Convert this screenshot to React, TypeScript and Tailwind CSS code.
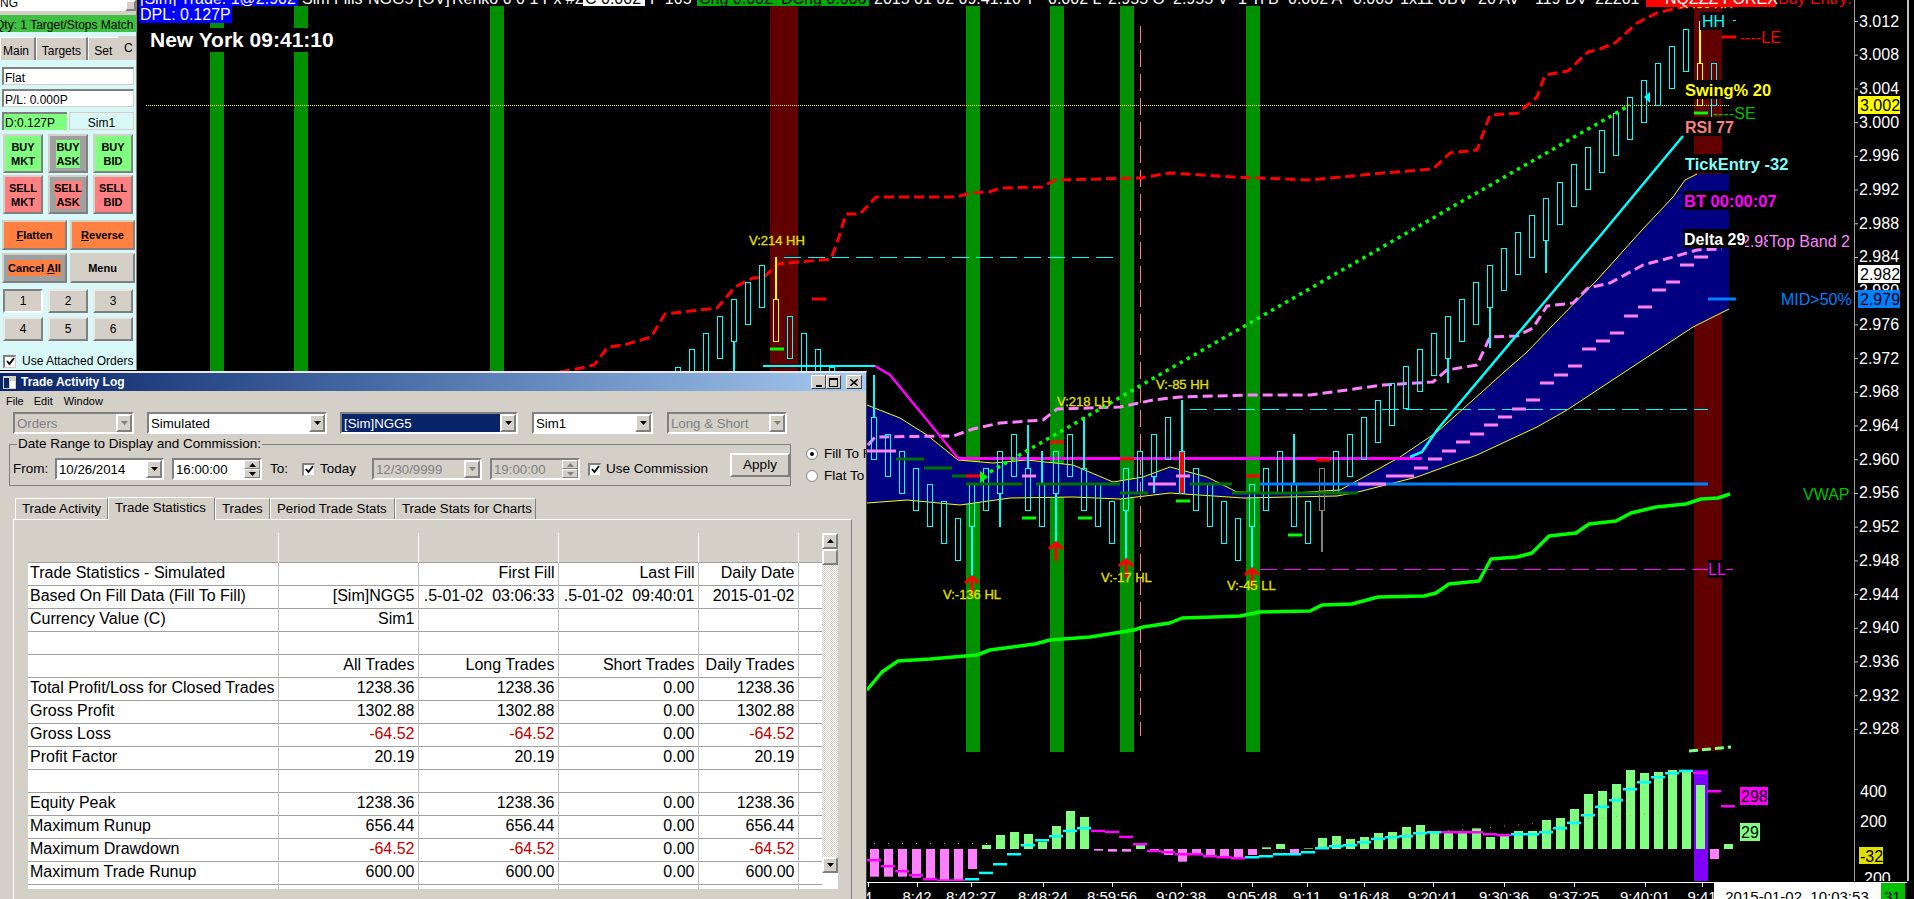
import React from "react";

const RAISED = "border-2 border-t-white border-l-white border-r-[#808080] border-b-[#808080]";
const SUNKEN = "border-2 border-t-[#808080] border-l-[#808080] border-r-white border-b-white";

// --- chart data, all in page pixels ---
const GREEN_BARS = [210, 294, 490, 966, 1050, 1120, 1246];

type Candle = [x: number, top: number, wickTop?: number, wickBottom?: number, color?: string, fill?: string];

const CANDLES: Candle[] = [
  [678, 367], [692, 349], [706, 333], [720, 316], [734, 299, 0, 371], [748, 282], [762, 265],
  [776, 299, 257, 0, "#ffff00"], [790, 316], [804, 333], [818, 349], [832, 367],
  [874, 417, 375], [888, 434], [902, 451], [916, 468], [930, 484], [944, 501], [958, 518],
  [972, 484, 0, 577], [986, 468], [1000, 451, 0, 527], [1014, 434], [1028, 468, 425], [1042, 484, 451],
  [1056, 451, 0, 543], [1070, 434], [1084, 468, 417], [1098, 484], [1112, 501], [1126, 468, 0, 560],
  [1140, 451], [1154, 434, 0, 493], [1168, 417], [1182, 451, 400, 0, "#00ffff", "#ff0000"], [1196, 468],
  [1210, 484], [1224, 501], [1238, 518], [1252, 484, 0, 570], [1266, 468], [1280, 451], [1294, 484, 434],
  [1308, 501], [1322, 468, 0, 552, "#808080"], [1336, 451], [1350, 434], [1364, 417], [1378, 400],
  [1392, 383], [1406, 366], [1420, 349], [1434, 333], [1448, 316, 0, 383], [1462, 299], [1476, 282],
  [1490, 265, 0, 348], [1504, 248], [1518, 232], [1532, 215], [1546, 198, 0, 273], [1560, 182], [1574, 164],
  [1588, 147], [1602, 130], [1616, 113], [1630, 97], [1644, 80], [1658, 63], [1672, 46], [1686, 29],
  [1700, 63, 21, 0, "#ffff00"], [1714, 63],
];

const pts = (a: number[][]) => a.map((p) => p.join(",")).join(" ");

const RED_LINE = [[560,372],[581,368],[594,365],[608,347],[624,345],[651,337],[665,314],[717,308],[735,287],[753,278],[764,277],[778,264],[831,259],[838,240],[846,214],[860,214],[876,197],[956,197],[971,193],[989,192],[1001,188],[1042,187],[1055,180],[1100,179],[1140,178],[1170,173],[1233,177],[1310,180],[1383,173],[1433,169],[1450,153],[1477,150],[1490,115],[1518,113],[1537,97],[1545,75],[1568,71],[1588,52],[1600,49],[1615,43],[1637,23],[1657,13],[1677,8],[1700,4]];
const PINK_LINE = [[868,445],[875,437],[953,436],[973,429],[1000,423],[1043,420],[1057,409],[1120,407],[1153,400],[1180,397],[1250,395],[1310,395],[1383,385],[1433,382],[1447,370],[1477,365],[1490,337],[1517,336],[1533,328],[1547,306],[1573,303],[1588,288],[1610,283],[1643,265],[1673,257],[1697,250],[1722,249]];
const CLOUD_TOP = [[867,405],[900,418],[927,435],[958,460],[993,463],[1027,460],[1073,465],[1113,482],[1143,477],[1170,467],[1207,477],[1237,492],[1293,493],[1340,490],[1353,483],[1400,457],[1437,432],[1473,400],[1503,373],[1527,352],[1553,325],[1597,280],[1642,230],[1673,197],[1685,180],[1697,174]];
const CLOUD_BOTTOM = [[867,503],[907,500],[960,505],[1010,498],[1073,497],[1120,499],[1170,493],[1243,498],[1337,496],[1358,492],[1417,477],[1477,455],[1537,427],[1567,410],[1617,377],[1693,327],[1729,309]];
const VWAP = [[867,690],[882,672],[898,661],[930,659],[977,655],[990,650],[1035,644],[1050,640],[1090,637],[1134,630],[1143,627],[1170,623],[1182,618],[1213,617],[1240,616],[1260,612],[1310,611],[1322,605],[1352,604],[1378,597],[1424,596],[1436,593],[1449,584],[1479,581],[1491,559],[1517,557],[1532,553],[1549,536],[1576,533],[1589,524],[1616,521],[1631,513],[1656,507],[1686,504],[1701,499],[1718,498],[1730,494]];
const CYAN_SLOPE = [[1410,457],[1422,452],[1437,430],[1605,230],[1683,136]];
const MAGENTA_SLOPE = [[875,366],[890,375],[927,420],[958,458]];

// [x1, x2, y]
const DARK_GREEN = [[896,924,459],[924,952,468],[952,966,476],[966,1022,484],[1036,1120,484],[1120,1148,493],[1190,1232,484],[1232,1358,493]];
const RED_TICKS = [[966,980,476],[1050,1064,442],[1120,1134,459],[1246,1260,476],[1316,1330,460],[812,826,299],[1722,1736,37]];
const LIME_TICKS = [[1022,1036,518],[1078,1092,518],[1176,1190,501],[1288,1302,535],[770,784,349],[1694,1708,113]];
const PINK_TICKS = [[867,896,451],[1022,1036,476],[1148,1176,484],[1176,1190,476],[1358,1386,484],[1386,1414,476],[1414,1428,468],[1428,1442,459],[1442,1456,451],[1456,1470,442],[1470,1484,434],[1484,1498,425],[1498,1512,417],[1512,1526,409],[1526,1540,400],[1540,1554,383],[1554,1568,375],[1568,1582,366],[1582,1596,349],[1596,1610,341],[1610,1624,333],[1624,1638,316],[1638,1652,307],[1652,1666,290],[1666,1680,282],[1680,1694,265],[1694,1708,257]];

const ARROWS = [[972,577],[1056,543],[1126,560],[1252,569]];

const VOLUME = [410,410,410,413,420,422,422,387,315,285,276,282,305,258,213,231,332,335,335,315,335,345,365,345,350,348,352,345,322,312,340,325,294,288,297,291,279,276,261,255,276,275,275,265,291,285,273,273,240,234,207,162,153,132,90,99,96,90,90,135,357,312];
// positive = cyan step, negative = magenta step
const STEPS = [-360,-378,-393,-405,-417,-421,-421,417,398,372,342,315,300,288,272,264,-272,-275,-290,-312,-332,-336,-342,-342,-348,-351,-354,351,348,342,342,336,324,318,315,306,296,291,288,279,276,-276,-276,-276,-282,-285,282,282,276,264,248,225,200,180,147,126,111,99,92,-98,-153,-198];

const PRICES = ["3.012","3.008","3.004","3.000","2.996","2.992","2.988","2.984","2.980","2.976","2.972","2.968","2.964","2.960","2.956","2.952","2.948","2.944","2.940","2.936","2.932","2.928"];
const TIMES: [number, string][] = [[868,"4"],[917,"8:42"],[971,"8:42:27"],[1043,"8:48:24"],[1112,"8:59:56"],[1181,"9:02:38"],[1252,"9:05:48"],[1307,"9:11"],[1364,"9:16:48"],[1433,"9:20:41"],[1504,"9:30:36"],[1574,"9:37:25"],[1645,"9:40:01"],[1702,"9:41"]];

const HEADER: [number, string][] = [
  [302,"Sim Fills"],[368,"NGG5 [OV]"],[452,"Renko 0 0 1 Px #2"],[650,"P  105"],[874,"2015 01 02 09:41:10 T"],[1048,"0.002 L"],[1108,"2.955 O"],[1173,"2.955 V"],[1238,"1 Tr"],[1268,"B"],[1288,"0.002 A"],[1353,"0.003"],[1400,"1x11 0"],[1447,"BV"],[1478,"20 AV"],[1535,"119 DV"],[1595,"22201"],
];

function Ticks({ list, color }: { list: number[][]; color: string }) {
  return (
    <>
      {list.map(([a, b, y]) => (
        <rect key={`${a}-${y}`} x={a} y={y - 1.5} width={b - a} height={3} fill={color} />
      ))}
    </>
  );
}

function Tag({ x, y, w, text, color, size = 16.5, bold = true }: { x: number; y: number; w: number; text: string; color: string; size?: number; bold?: boolean }) {
  return (
    <>
      <rect x={x} y={y - 10} width={w} height={19} fill="#000" />
      <text x={x + 1} y={y} dominantBaseline="central" fontSize={size} fontWeight={bold ? 700 : 400} fill={color}>
        {text}
      </text>
    </>
  );
}

function PriceBox({ y, text, bg }: { y: number; text: string; bg: string }) {
  return (
    <>
      <rect x={1858} y={y - 9} width={42} height={18} fill={bg} />
      <text x={1860} y={y} dominantBaseline="central" fontSize={16} fill="#000">{text}</text>
    </>
  );
}

function Chart() {
  return (
    <svg viewBox="137 0 1777 899" className="block w-[1777px] h-[899px] shrink-0 bg-black">
      {GREEN_BARS.map((x) => (
        <rect key={x} x={x} y={6} width={14} height={746} fill="#009000" />
      ))}
      <rect x={770} y={6} width={28} height={366} fill="#600000" />
      <rect x={1694} y={6} width={28} height={745} fill="#600000" />

      <rect x={137} y={28} width={210} height={24} fill="#000" />

      <polygon points={pts([...CLOUD_TOP, [1729, 174], ...[...CLOUD_BOTTOM].reverse()])} fill="#000080" />
      <polyline points={pts(CLOUD_TOP)} fill="none" stroke="#ffff00" strokeWidth={1} />
      <polyline points={pts(CLOUD_BOTTOM)} fill="none" stroke="#ffff00" strokeWidth={1} />

      <line x1={146} y1={105.5} x2={1729} y2={105.5} stroke="#ffff00" strokeWidth={1} strokeDasharray="1 1" />
      <line x1={784} y1={257.5} x2={1114} y2={257.5} stroke="#00ffff" strokeWidth={1} strokeDasharray="17 7" />
      <line x1={1190} y1={409.5} x2={1708} y2={409.5} stroke="#00ffff" strokeWidth={1} strokeDasharray="17 7" />
      <line x1={1260} y1={569.5} x2={1737} y2={569.5} stroke="#ff00ff" strokeWidth={1} strokeDasharray="17 7" />
      <line x1={1140.5} y1={26} x2={1140.5} y2={736} stroke="#ff8080" strokeWidth={1} strokeDasharray="17 7" />

      <polyline points={pts(RED_LINE)} fill="none" stroke="#ff0000" strokeWidth={3} strokeLinejoin="round" strokeDasharray="10 5" />
      <polyline points={pts(PINK_LINE)} fill="none" stroke="#ff80ff" strokeWidth={3} strokeLinejoin="round" strokeDasharray="10 5" />
      <polyline points={pts(VWAP)} fill="none" stroke="#00ff00" strokeWidth={3.5} strokeLinejoin="round" />

      <line x1={763} y1={366} x2={875} y2={366} stroke="#00ffff" strokeWidth={2} />
      <polyline points={pts(MAGENTA_SLOPE)} fill="none" stroke="#ff00ff" strokeWidth={2.5} />
      <rect x={958} y={457} width={464} height={3} fill="#ff00ff" />

      {CANDLES.map(([x, top, wt, wb, color = "#00ffff", fill]) => (
        <g key={x}>
          {wt ? <line x1={x} y1={wt} x2={x} y2={top} stroke={color} strokeWidth={2} /> : null}
          {wb ? <line x1={x} y1={top + 42} x2={x} y2={wb} stroke={color} strokeWidth={2} /> : null}
          <rect x={x - 2.5} y={top + 0.5} width={5} height={42} fill={fill ?? "none"} stroke={color} strokeWidth={1} />
        </g>
      ))}

      <Ticks list={DARK_GREEN} color="#007000" />
      <rect x={1260} y={482.5} width={448} height={3} fill="#0080ff" />
      <Ticks list={RED_TICKS} color="#ff0000" />
      <Ticks list={LIME_TICKS} color="#00ff00" />
      <Ticks list={PINK_TICKS} color="#ff80ff" />
      <rect x={1708} y={297.5} width={28} height={3} fill="#0080ff" />

      <polyline points={pts(CYAN_SLOPE)} fill="none" stroke="#00ffff" strokeWidth={2.5} />
      <line x1={990} y1={472} x2={1630} y2={105} stroke="#00ff00" strokeWidth={3.5} strokeDasharray="3.5 4.6" />
      <polygon points="980,471 988,477 980,483" fill="#00ff00" />
      <polygon points="1650,92 1644,97 1650,103" fill="#00ffff" />
      <line x1={1711.5} y1={105} x2={1711.5} y2={117} stroke="#00ffff" strokeWidth={1} />

      {ARROWS.map(([x, y]) => (
        <path key={x} d={`M${x - 7} ${y + 6} L${x} ${y} L${x + 7} ${y + 6} M${x} ${y} L${x} ${y + 18}`} fill="none" stroke="#ff0000" strokeWidth={3} />
      ))}

      <g fontSize={13} fill="#e0e000" stroke="#e0e000" strokeWidth={0.3}>
        <text x={749} y={245}>V:214 HH</text>
        <text x={1057} y={406}>V:218 LH</text>
        <text x={1156} y={389}>V:-85 HH</text>
        <text x={943} y={599}>V:-136 HL</text>
        <text x={1101} y={582}>V:-17 HL</text>
        <text x={1227} y={590}>V:-45 LL</text>
        <text x={1677} y={8}>V:436 HH</text>
      </g>

      {/* right side labels */}
      <rect x={1700} y={12} width={40} height={18} fill="#000" />
      <text x={1702} y={21} dominantBaseline="central" fontSize={16} fill="#00ffff">HH</text>
      <rect x={1733} y={20} width={3} height={1} fill="#00ffff" />
      <text x={1740} y={37} dominantBaseline="central" fontSize={16} fill="#ff0000">----LE</text>
      <Tag x={1684} y={90} w={86} text="Swing% 20" color="#ffff00" />
      <text x={1713} y={113} dominantBaseline="central" fontSize={16} fill="#00c000">----SE</text>
      <Tag x={1684} y={127} w={50} text="RSI 77" color="#ff8080" size={16} />
      <Tag x={1684} y={164} w={101} text="TickEntry -32" color="#80ffff" />
      <Tag x={1683} y={201} w={94} text="BT 00:00:07" color="#ff00ff" />
      <text x={1741} y={241} dominantBaseline="central" fontSize={16} fill="#ff80ff">2.984</text>
      <rect x={1768} y={231} width={84} height={20} fill="#000" />
      <text x={1769} y={241} dominantBaseline="central" fontSize={16} fill="#ff80ff">Top Band 2</text>
      <Tag x={1683} y={239} w={62} text="Delta 29" color="#ffffff" size={16} />
      <text x={1781} y={299} dominantBaseline="central" fontSize={16} fill="#0080ff">MID&gt;50%</text>
      <text x={1803} y={494} dominantBaseline="central" fontSize={16} fill="#00c000">VWAP</text>
      <rect x={1708} y={560} width={18} height={18} fill="#000" />
      <text x={1708} y={569} dominantBaseline="central" fontSize={16} fill="#ff00ff">LL</text>
      <line x1={1689} y1={751} x2={1731} y2={747} stroke="#80ff80" strokeWidth={3} strokeDasharray="9 4" />

      {/* lower panel */}
      {VOLUME.map((v, i) => {
        const x = 874 + 14 * i;
        const y = 740 + v / 3;
        if (i === 59) return null;
        return v < 327 ? (
          <rect key={i} x={x - 4} y={y} width={9} height={849 - y} fill="#80ff80" />
        ) : (
          <rect key={i} x={x - 4} y={849} width={9} height={y - 849} fill="#ff80ff" />
        );
      })}
      <rect x={1694} y={770} width={14} height={111} fill="#8000ff" />
      <rect x={1696} y={785} width={9} height={64} fill="#80ff80" />
      {STEPS.map((s, i) => (
        <rect key={i} x={867 + 14 * i} y={740 + Math.abs(s) / 3 - 1} width={14} height={2.5} fill={s > 0 ? "#00ffff" : "#ff00ff"} />
      ))}
      {Array.from({ length: 24 }, (_, i) => (
        <rect key={i} x={1336 + 14 * i} y={840 - i * 1.2} width={1} height={1} fill="#ff8040" />
      ))}
      {Array.from({ length: 9 }, (_, i) => (
        <rect key={i} x={874 + 14 * i} y={843} width={1} height={1} fill="#ff8040" />
      ))}
      <rect x={1740} y={787} width={28} height={18} fill="#ff00ff" />
      <text x={1741} y={796} dominantBaseline="central" fontSize={16} fill="#000">298</text>
      <rect x={1740} y={823} width={20} height={18} fill="#80ff80" />
      <text x={1741} y={832} dominantBaseline="central" fontSize={16} fill="#000">29</text>

      {/* header strip, cut by the top of the screen */}
      <rect x={137} y={0} width={1700} height={6} fill="#000" />
      <rect x={139} y={0} width={159} height={6} fill="#0000ff" />
      <rect x={583} y={0} width={62} height={6} fill="#fff" />
      <rect x={697} y={0} width={172} height={6} fill="#00aa00" />
      <rect x={1646} y={0} width={130} height={7} fill="#ff0000" />
      <g fontSize={16} fill="#fff" className="whitespace-pre">
        <text x={140} y={4}>[Sim]  Trade: 1@2.902</text>
        {HEADER.map(([x, t]) => (
          <text key={x} x={x} y={4}>{t}</text>
        ))}
        <text x={585} y={4} fill="#000">C  0.002</text>
        <text x={699} y={4} fill="#000">Chg  0.002</text>
        <text x={781} y={4} fill="#000">DChg  0.066</text>
        <text x={1665} y={4}>NQZZZ FOREX</text>
        <text x={1778} y={4} fill="#ff0000">Buy Entry: C</text>
      </g>
      <rect x={139} y={6} width={93} height={17} fill="#0000ff" />
      <text x={140} y={20} fontSize={16} fill="#fff">DPL: 0.127P</text>
      <text x={150} y={47} fontSize={21} fontWeight={700} fill="#fff">New York 09:41:10</text>

      {/* price axis */}
      <rect x={1854} y={0} width={60} height={882} fill="#000" />
      <rect x={1854} y={0} width={1} height={882} fill="#a0a0a0" />
      <rect x={1907} y={0} width={2} height={882} fill="#c0c0c0" />
      {PRICES.map((p, i) => {
        const y = 21 + i * 33.71;
        return (
          <g key={p}>
            <rect x={1855} y={y} width={3} height={1} fill="#c0c0c0" />
            <text x={1859} y={y} dominantBaseline="central" fontSize={16} fill="#fff">{p}</text>
          </g>
        );
      })}
      <PriceBox y={105} text="3.002" bg="#ffff00" />
      <PriceBox y={274} text="2.982" bg="#ffffff" />
      <PriceBox y={299} text="2.979" bg="#0080ff" />
      <text x={1860} y={791} dominantBaseline="central" fontSize={16} fill="#fff">400</text>
      <text x={1860} y={821} dominantBaseline="central" fontSize={16} fill="#fff">200</text>
      <text x={1864} y={878} dominantBaseline="central" fontSize={16} fill="#fff">200</text>
      <rect x={1859} y={847} width={24} height={17} fill="#e0e000" />
      <text x={1860} y={856} dominantBaseline="central" fontSize={16} fill="#000">-32</text>

      {/* time axis */}
      <rect x={867} y={881} width={1047} height={18} fill="#000" />
      <rect x={867} y={882} width={1040} height={1} fill="#fff" />
      {TIMES.map(([x, t]) => (
        <g key={t}>
          <rect x={x} y={883} width={1} height={4} fill="#fff" />
          <text x={x} y={896} textAnchor="middle" dominantBaseline="central" fontSize={15} fill="#fff">{t}</text>
        </g>
      ))}
      <rect x={1714} y={883} width={167} height={16} fill="#fff" />
      <text x={1797} y={896} textAnchor="middle" dominantBaseline="central" fontSize={15} fill="#000" className="whitespace-pre">2015-01-02  10:03:53</text>
      <rect x={1881} y={883} width={24} height={16} fill="#00c000" />
      <text x={1884} y={896} dominantBaseline="central" fontSize={15} fill="#000">31</text>
    </svg>
  );
}

function OrderButton({ top, bottom, bg, plain }: { top: string; bottom: string; bg: string; plain?: boolean }) {
  return (
    <div className={`w-[40px] h-[39px] flex flex-col items-center justify-center border-2 border-t-[#d4d0c8] border-l-[#d4d0c8] border-r-[#808080] border-b-[#808080] text-[11px] leading-[14px] font-bold text-black ${plain ? "bg-[#a0a0a0]" : bg}`}>
      <span className={plain ? bg : ""}>{top}</span>
      <span className={plain ? bg : ""}>{bottom}</span>
    </div>
  );
}

function WideButton({ children, className }: { children: React.ReactNode; className: string }) {
  return (
    <div className={`w-[65px] h-[30px] flex items-center justify-center border-2 border-t-[#d4d0c8] border-l-[#d4d0c8] border-r-[#808080] border-b-[#808080] text-[11px] font-bold text-black ${className}`}>
      {children}
    </div>
  );
}

function NumKey({ n, pressed, className }: { n: number; pressed?: boolean; className: string }) {
  return (
    <div className={`h-[24px] flex items-center justify-center bg-[#d4d0c8] text-[12px] text-black ${pressed ? SUNKEN : "border-2 border-t-[#e8e8e8] border-l-[#e8e8e8] border-r-[#808080] border-b-[#808080]"} ${className}`}>
      {n}
    </div>
  );
}

function LeftPanel() {
  return (
    <div className="w-[137px] h-[370px] shrink-0 flex flex-col overflow-hidden bg-[#d8f8f8] text-[12px] text-black border-r border-[#808080]">
      <div className="h-[15px] bg-[#d4d0c8] flex items-start">
        <div className="w-[125px] h-[11px] bg-white overflow-hidden text-[12px] leading-[7px]">NG</div>
        <div className={`w-[11px] h-[11px] bg-[#d4d0c8] ${RAISED}`} />
      </div>
      <div className="h-[17px] bg-[#40c040] whitespace-nowrap overflow-hidden -indent-[5px] leading-[20px]">Qty: 1 Target/Stops Match</div>
      <div className="h-[28px] pt-[5px] flex items-start">
        <div className="w-[36px] h-[23px] overflow-hidden bg-[#d4d0c8] border-t border-l border-white border-r-2 border-r-[#808080] pl-[2px] leading-[27px]">Main</div>
        <div className="w-[53px] h-[23px] overflow-hidden bg-[#d4d0c8] border-t border-l border-white border-r-2 border-r-[#808080] pl-[5px] leading-[27px]">Targets</div>
        <div className="w-[30px] h-[23px] overflow-hidden bg-[#d4d0c8] border-t border-l border-white pl-[5px] leading-[27px]">Set</div>
        <div className="w-[18px] h-[24px] -mt-[1px] bg-[#d4d0c8] pl-[6px] leading-[24px]">C</div>
      </div>
      <div className="mx-[2px] mt-[7px] h-[18px] overflow-hidden bg-white pl-[1px] leading-[19px] border-t-2 border-l-2 border-t-[#808080] border-l-[#808080] border-r border-b border-r-[#d4d0c8] border-b-[#d4d0c8]">Flat</div>
      <div className="mx-[2px] mt-[4px] h-[18px] overflow-hidden bg-white pl-[1px] leading-[19px] border-t-2 border-l-2 border-t-[#808080] border-l-[#808080] border-r border-b border-r-[#d4d0c8] border-b-[#d4d0c8]">P/L: 0.000P</div>
      <div className="mx-[2px] mt-[5px] h-[18px] flex gap-[2px]">
        <div className="w-[65px] overflow-hidden bg-[#80ff80] pl-[1px] leading-[19px] border-t-2 border-l-2 border-t-[#808080] border-l-[#808080]">D:0.127P</div>
        <div className="w-[65px] overflow-hidden text-center leading-[20px] border border-[#d4d0c8]">Sim1</div>
      </div>
      <div className="mt-[4px] flex gap-[5px] pl-[3px]">
        <OrderButton top="BUY" bottom="MKT" bg="bg-[#80ff80]" />
        <OrderButton top="BUY" bottom="ASK" bg="bg-[#80ff80]" plain />
        <OrderButton top="BUY" bottom="BID" bg="bg-[#80ff80]" />
      </div>
      <div className="mt-[2px] flex gap-[5px] pl-[3px]">
        <OrderButton top="SELL" bottom="MKT" bg="bg-[#ff8080]" />
        <OrderButton top="SELL" bottom="ASK" bg="bg-[#ff8080]" plain />
        <OrderButton top="SELL" bottom="BID" bg="bg-[#ff8080]" />
      </div>
      <div className="mt-[6px] flex gap-[3px] pl-[2px]">
        <WideButton className="bg-[#ff8040]"><span><u>F</u>latten</span></WideButton>
        <WideButton className="bg-[#ff8040]"><span><u>R</u>everse</span></WideButton>
      </div>
      <div className="mt-[3px] flex gap-[3px] pl-[2px]">
        <WideButton className="bg-[#a0a0a0]"><span className="bg-[#ff8040]">Cancel <u>A</u>ll</span></WideButton>
        <WideButton className="bg-[#d4d0c8]">Menu</WideButton>
      </div>
      <div className="mt-[6px] flex gap-[5px] pl-[3px]">
        <NumKey n={1} pressed className="w-[40px]" />
        <NumKey n={2} className="w-[40px]" />
        <NumKey n={3} className="w-[40px]" />
      </div>
      <div className="mt-[4px] flex gap-[5px] pl-[3px]">
        <NumKey n={4} className="w-[40px]" />
        <NumKey n={5} className="w-[40px]" />
        <NumKey n={6} className="w-[40px]" />
      </div>
      <div className="mt-[11px] pl-[3px] flex items-center gap-[6px]">
        <Check />
        <span>Use Attached Orders</span>
      </div>
    </div>
  );
}

function Check({ disabled }: { disabled?: boolean }) {
  return (
    <div className="w-[13px] h-[13px] shrink-0 bg-white flex items-center justify-center border-t-2 border-l-2 border-t-[#808080] border-l-[#808080] border-r border-b border-r-[#d4d0c8] border-b-[#d4d0c8]">
      <svg viewBox="0 0 9 9" className="w-[9px] h-[9px]">
        <path d="M1 4 L3.5 7 L8 1" fill="none" stroke={disabled ? "#808080" : "#000"} strokeWidth={1.8} />
      </svg>
    </div>
  );
}

function Arrow({ up, color = "#000" }: { up?: boolean; color?: string }) {
  return (
    <svg viewBox="0 0 7 4" className="w-[7px] h-[4px]">
      <polygon points={up ? "0,4 7,4 3.5,0" : "0,0 7,0 3.5,4"} fill={color} />
    </svg>
  );
}

function Combo({ text, className, disabled, selected }: { text: string; className: string; disabled?: boolean; selected?: boolean }) {
  return (
    <div className={`h-[22px] flex items-stretch text-[13.25px] leading-[19px] ${SUNKEN} ${disabled ? "bg-[#d4d0c8] text-[#808080]" : "bg-white text-black"} ${className}`}>
      <div className={`flex-1 min-w-0 pl-[2px] whitespace-nowrap overflow-hidden ${selected ? "bg-[#0a246a] text-white" : ""}`}>{text}</div>
      <div className={`w-[16px] flex items-center justify-center bg-[#d4d0c8] ${RAISED}`}>
        <Arrow color={disabled ? "#808080" : "#000"} />
      </div>
    </div>
  );
}

function TimeField({ text, className, disabled }: { text: string; className: string; disabled?: boolean }) {
  return (
    <div className={`h-[22px] flex items-stretch text-[13.25px] leading-[19px] ${SUNKEN} ${disabled ? "bg-[#d4d0c8] text-[#808080]" : "bg-white text-black"} ${className}`}>
      <div className="flex-1 pl-[2px]">{text}</div>
      <div className="w-[16px] flex flex-col">
        <div className="h-[9px] flex items-center justify-center bg-[#d4d0c8] border border-t-white border-l-white border-r-[#808080] border-b-[#808080]">
          <Arrow up color={disabled ? "#808080" : "#000"} />
        </div>
        <div className="h-[9px] flex items-center justify-center bg-[#d4d0c8] border border-t-white border-l-white border-r-[#808080] border-b-[#808080]">
          <Arrow color={disabled ? "#808080" : "#000"} />
        </div>
      </div>
    </div>
  );
}

const RED = "text-[#c00000]";
const STATS: string[][] = [
  ["Trade Statistics - Simulated", "", "First Fill", "Last Fill", "Daily Date"],
  ["Based On Fill Data (Fill To Fill)", "[Sim]NGG5", ".5-01-02  03:06:33", ".5-01-02  09:40:01", "2015-01-02"],
  ["Currency Value (C)", "Sim1", "", "", ""],
  ["", "", "", "", ""],
  ["", "All Trades", "Long Trades", "Short Trades", "Daily Trades"],
  ["Total Profit/Loss for Closed Trades", "1238.36", "1238.36", "0.00", "1238.36"],
  ["Gross Profit", "1302.88", "1302.88", "0.00", "1302.88"],
  ["Gross Loss", "-64.52", "-64.52", "0.00", "-64.52"],
  ["Profit Factor", "20.19", "20.19", "0.00", "20.19"],
  ["", "", "", "", ""],
  ["Equity Peak", "1238.36", "1238.36", "0.00", "1238.36"],
  ["Maximum Runup", "656.44", "656.44", "0.00", "656.44"],
  ["Maximum Drawdown", "-64.52", "-64.52", "0.00", "-64.52"],
  ["Maximum Trade Runup", "600.00", "600.00", "0.00", "600.00"],
];

function StatsTable() {
  return (
    <table className="table-fixed border-collapse w-[794px] text-[16px] text-black">
      <colgroup>
        <col className="w-[250px]" />
        <col className="w-[140px]" />
        <col className="w-[140px]" />
        <col className="w-[140px]" />
        <col className="w-[100px]" />
        <col className="w-[24px]" />
      </colgroup>
      <tbody>
        <tr className="h-[29px] bg-[#d4d0c8] border-b border-[#a0a0a0]">
          {[0, 1, 2, 3, 4].map((c) => (
            <td key={c} className="border-r border-white p-0" />
          ))}
          <td className="p-0" />
        </tr>
        {STATS.map((row, r) => (
          <tr key={r} className="h-[23px] border-b border-[#a0a0a0]">
            {row.map((cell, c) => (
              <td
                key={c}
                className={`p-0 pb-[1px] overflow-hidden whitespace-pre leading-[18px] border-r border-[#c0c0c0] ${c === 0 ? "pl-[2px]" : "text-right pr-[3px]"} ${cell.startsWith("-") ? RED : ""}`}
              >
                {cell}
              </td>
            ))}
            <td className="p-0" />
          </tr>
        ))}
        <tr className="h-[5px]">
          <td className="p-0 border-r border-[#c0c0c0]" />
          <td className="p-0 border-r border-[#c0c0c0]" />
          <td className="p-0 border-r border-[#c0c0c0]" />
          <td className="p-0 border-r border-[#c0c0c0]" />
          <td className="p-0 border-r border-[#c0c0c0]" />
          <td className="p-0" />
        </tr>
      </tbody>
    </table>
  );
}

function TradeLog() {
  const tabs = [
    { label: "Trade Activity", w: "w-[93px]" },
    { label: "Trade Statistics", w: "w-[107px]", active: true },
    { label: "Trades", w: "w-[55px]" },
    { label: "Period Trade Stats", w: "w-[125px]" },
    { label: "Trade Stats for Charts", w: "w-[141px]" },
  ];
  return (
    <div className="absolute left-0 top-[371px] w-[867px] h-[528px] overflow-hidden bg-[#d4d0c8] border-t-2 border-t-[#e8e8e8] border-r border-r-[#404040] text-black">
      <div className="h-[18px] flex items-center bg-gradient-to-r from-[#0a246a] to-[#a6caf0] text-white text-[12px] font-bold pl-[3px]">
        <svg viewBox="0 0 13 13" className="w-[13px] h-[13px] mr-[5px]">
          <rect width="13" height="13" fill="#d4d0c8" />
          <rect x="1" y="2" width="5" height="10" fill="#0a246a" />
          <rect x="7" y="5" width="5" height="7" fill="#fff" />
        </svg>
        <span className="flex-1">Trade Activity Log</span>
        <div className="flex mr-[4px]">
          <div className="w-[15px] h-[14px] bg-[#d4d0c8] flex items-end justify-center pb-[1px] border border-t-white border-l-white border-r-[#404040] border-b-[#404040]">
            <div className="w-[6px] h-[2px] bg-black" />
          </div>
          <div className="w-[15px] h-[14px] bg-[#d4d0c8] flex items-center justify-center border border-t-white border-l-white border-r-[#404040] border-b-[#404040]">
            <div className="w-[9px] h-[9px] border border-black border-t-2" />
          </div>
          <div className="w-[16px] h-[14px] ml-[5px] bg-[#d4d0c8] flex items-center justify-center border border-t-white border-l-white border-r-[#404040] border-b-[#404040]">
            <svg viewBox="0 0 8 7" className="w-[8px] h-[7px]"><path d="M0 0 L8 7 M8 0 L0 7" stroke="#000" strokeWidth={1.6} /></svg>
          </div>
        </div>
      </div>
      <div className="h-[21px] flex items-center text-[11px]">
        <span className="ml-[6px]">File</span>
        <span className="ml-[10px]">Edit</span>
        <span className="ml-[11px]">Window</span>
      </div>
      <div className="flex">
        <Combo text="Orders" disabled className="w-[121px] ml-[13px]" />
        <Combo text="Simulated" className="w-[180px] ml-[13px]" />
        <Combo text="[Sim]NGG5" selected className="w-[178px] ml-[13px]" />
        <Combo text="Sim1" className="w-[121px] ml-[14px]" />
        <Combo text="Long & Short" disabled className="w-[120px] ml-[14px]" />
      </div>
      <div className="mt-[10px] flex items-start">
        <div className="relative ml-[9px] w-[788px] h-[42px] border border-[#808080] text-[13.5px] flex items-start pt-[13px] pl-[3px]">
          <span className="absolute left-[7px] -top-[10px] bg-[#d4d0c8] px-[1px] leading-[17px]">Date Range to Display and Commission:</span>
          <span className="w-[42px] leading-[22px]">From:</span>
          <Combo text="10/26/2014" className="w-[109px]" />
          <TimeField text="16:00:00" className="w-[90px] ml-[8px]" />
          <span className="ml-[8px] w-[32px] leading-[22px]">To:</span>
          <div className="h-[22px] flex items-center"><Check /></div>
          <span className="ml-[5px] w-[52px] leading-[22px]">Today</span>
          <Combo text="12/30/9999" disabled className="w-[110px]" />
          <TimeField text="19:00:00" disabled className="w-[90px] ml-[8px]" />
          <div className="h-[22px] ml-[8px] flex items-center"><Check /></div>
          <span className="ml-[5px] w-[124px] leading-[22px] whitespace-nowrap">Use Commission</span>
          <div className={`w-[60px] h-[24px] -mt-[5px] bg-[#d4d0c8] flex items-center justify-center ${RAISED}`}>Apply</div>
        </div>
        <div className="ml-[15px] -mt-[1px] flex flex-col text-[13.5px] whitespace-nowrap">
          <div className="h-[22px] flex items-center gap-[6px]">
            <div className="w-[12px] h-[12px] rounded-full bg-white border border-[#808080] flex items-center justify-center">
              <div className="w-[4px] h-[4px] rounded-full bg-black" />
            </div>
            <span>Fill To Fill</span>
          </div>
          <div className="h-[22px] flex items-center gap-[6px]">
            <div className="w-[12px] h-[12px] rounded-full bg-white border border-[#808080]" />
            <span>Flat To Flat</span>
          </div>
        </div>
      </div>
      <div className="mt-[10px] ml-[15px] h-[22px] flex items-end text-[13.25px]">
        {tabs.map((t) => (
          <div
            key={t.label}
            className={`${t.w} whitespace-nowrap bg-[#d4d0c8] border-t border-l border-t-white border-l-white border-r border-r-[#808080] pl-[6px] ${t.active ? "h-[23px] leading-[19px] relative z-10 -mb-[1px]" : "h-[21px] leading-[20px]"}`}
          >
            {t.label}
          </div>
        ))}
      </div>
      <div className="ml-[13px] w-[839px] h-[380px] border-t border-l border-t-white border-l-white border-r border-r-[#808080] pt-[13px] pl-[14px]">
        <div className="w-[810px] h-[356px] bg-white flex items-start">
          <StatsTable />
          <div className="w-[16px] h-[340px] flex flex-col bg-[#e4e2dc]">
            <div className={`h-[16px] flex items-center justify-center bg-[#d4d0c8] ${RAISED}`}><Arrow up /></div>
            <div className={`h-[16px] bg-[#d4d0c8] ${RAISED}`} />
            <div className="flex-1 bg-[repeating-conic-gradient(#d4d0c8_0%_25%,#ffffff_0%_50%)] bg-[length:2px_2px]" />
            <div className={`h-[16px] flex items-center justify-center bg-[#d4d0c8] ${RAISED}`}><Arrow /></div>
          </div>
        </div>
      </div>
    </div>
  );
}

export default function App() {
  return (
    <div className="relative flex w-[1914px] h-[899px] overflow-hidden bg-black [font-family:'Liberation_Sans',Arial,sans-serif]">
      <LeftPanel />
      <Chart />
      <TradeLog />
    </div>
  );
}
